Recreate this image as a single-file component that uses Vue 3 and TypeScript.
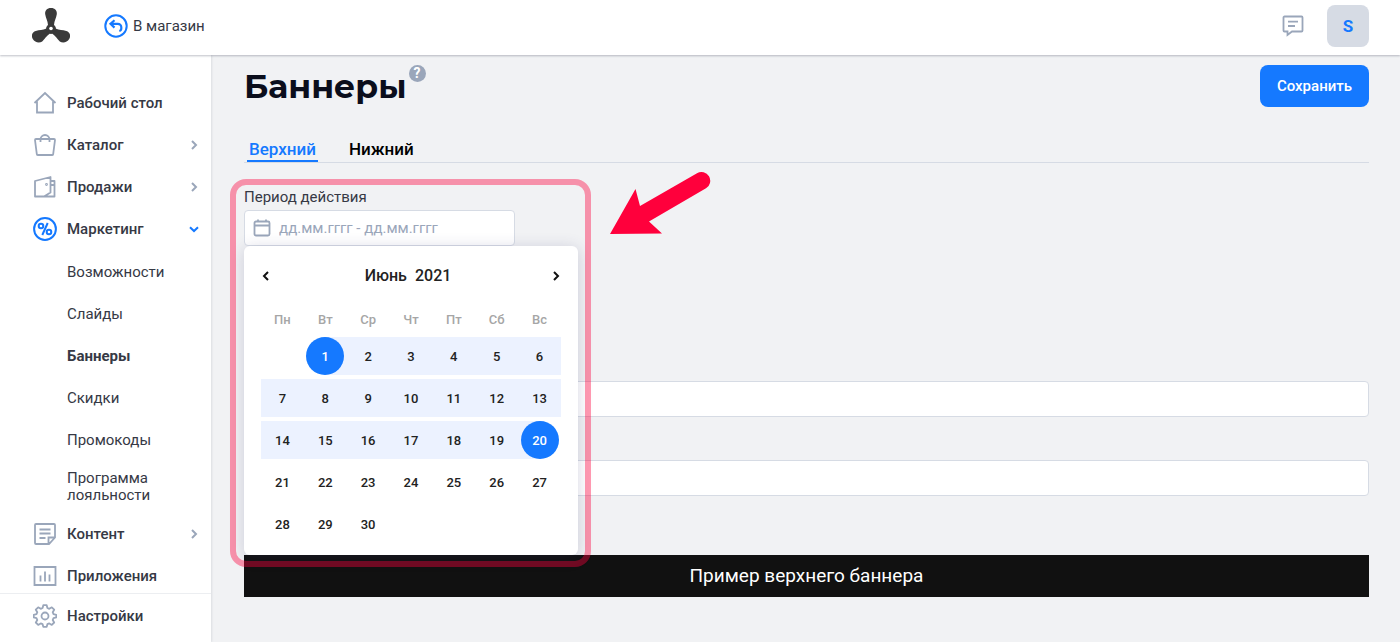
<script setup lang="ts">
import { computed, ref } from 'vue'

interface NavItem {
  id: string
  label: string
  expandable?: boolean
}

const topItems: NavItem[] = [
  { id: 'desk', label: 'Рабочий стол' },
  { id: 'catalog', label: 'Каталог', expandable: true },
  { id: 'sales', label: 'Продажи', expandable: true },
  { id: 'marketing', label: 'Маркетинг', expandable: true },
]
const marketingItems: string[] = ['Возможности', 'Слайды', 'Баннеры', 'Скидки', 'Промокоды', 'Программа лояльности']
const bottomItems: NavItem[] = [
  { id: 'content', label: 'Контент', expandable: true },
  { id: 'apps', label: 'Приложения' },
]

const tabs: string[] = ['Верхний', 'Нижний']
const activeTab = ref<string>('Верхний')

const weekdays: string[] = ['Пн', 'Вт', 'Ср', 'Чт', 'Пт', 'Сб', 'Вс']
const rangeStart = ref<number>(1)
const rangeEnd = ref<number>(20)
const firstOffset = 1
const daysInMonth = 30

const weeks = computed<(number | null)[][]>(() =>
  Array.from({ length: 5 }, (_, w) =>
    Array.from({ length: 7 }, (_, d) => {
      const day = w * 7 + d + 1 - firstOffset
      return day >= 1 && day <= daysInMonth ? day : null
    }),
  ),
)

function dayClass(day: number | null) {
  return {
    start: day === rangeStart.value,
    end: day === rangeEnd.value,
    within: day !== null && day > rangeStart.value && day < rangeEnd.value,
  }
}
</script>

<template>
  <div class="page">
    <header class="topbar">
      <a href="#" class="logo" aria-label="Главная">
        <svg width="38" height="36" viewBox="0 0 38 36" fill="#3a3a3a">
          <path d="M19 0c4 0 6.300 2.600 5.800 6.300-.6 4-2.500 6.200-2.800 10.700h-6c-.3-4.500-2.200-6.700-2.800-10.700C12.700 2.600 15 0 19 0z" />
          <path d="M.8 31c-2-3.500-.6-7 2.900-8 3.900-1.200 6.700-.4 10.800-2.400l3.400 5c-3.800 2.600-4.500 5.100-7.700 7.800C7.300 35.600 2.800 34.500.8 31z" />
          <path d="M37.200 31c2-3.500.6-7-2.900-8-3.900-1.200-6.700-.4-10.800-2.400l-3.400 5c3.800 2.600 4.500 5.100 7.700 7.800 2.900 2.200 7.400 1.100 9.400-2.400z" />
          <circle cx="19" cy="21" r="5" />
          <circle cx="19" cy="20.500" r="1.800" fill="#fff" />
        </svg>
      </a>
      <a href="#" class="to-shop">
        <svg width="24" height="24" viewBox="0 0 24 24" fill="none" stroke="#1579ff" stroke-width="2">
          <circle cx="12" cy="12" r="10.700" />
          <path d="M10.500 6.200 6.500 9.800l4 3.800M6.800 9.800h7a3.500 3.500 0 0 1 3.500 3.500v1.200c0 1.200-.8 2.200-2 2.500" stroke-width="2.200" />
        </svg>
        <span>В магазин</span>
      </a>
      <button type="button" class="chat" aria-label="Сообщения">
        <svg width="22" height="22" viewBox="0 0 22 22" fill="none" stroke="#9aa6ba" stroke-width="1.800">
          <path d="M2.500 1.500h17a1 1 0 0 1 1 1v13a1 1 0 0 1-1 1H10L5.500 20v-3.500h-3a1 1 0 0 1-1-1v-13a1 1 0 0 1 1-1z" />
          <path d="M6 6.700h10M6 11h7" />
        </svg>
      </button>
      <button type="button" class="avatar">S</button>
    </header>

    <div class="body">
      <aside class="sidebar">
        <nav class="nav">
          <a v-for="item in topItems" :key="item.id" href="#" class="nav-item">
            <svg v-if="item.id === 'desk'" class="icon" viewBox="0 0 24 24">
              <path d="M1.500 12 12 2l10.500 10M4 10.500v11h16v-11" />
            </svg>
            <svg v-else-if="item.id === 'catalog'" class="icon" viewBox="0 0 24 24">
              <path d="M3 6h18a1 1 0 0 1 1 1l-1.800 14a1 1 0 0 1-1 1H4.800a1 1 0 0 1-1-1L2 7a1 1 0 0 1 1-1zM7.500 9V6.500a4.500 4.500 0 0 1 9 0V9" />
            </svg>
            <svg v-else-if="item.id === 'sales'" class="icon" viewBox="0 0 24 24">
              <path d="M2 6 17.500 2v15.500L11 21.500H2zM17.500 6h4v15.500H9M17.500 10h4" stroke-linejoin="round" />
              <circle cx="13.500" cy="9.500" r=".5" />
            </svg>
            <svg v-else class="icon active" viewBox="0 0 24 24">
              <circle cx="12" cy="12" r="10.900" />
              <circle cx="8" cy="9" r="2.300" />
              <circle cx="16" cy="15" r="2.300" />
              <path d="M14.700 6 9.300 18" />
            </svg>
            <span class="nav-label">{{ item.label }}</span>
            <svg v-if="item.id === 'marketing'" class="chevron open" viewBox="0 0 10 10"><path d="M1 3.200 5 7l4-3.800" /></svg>
            <svg v-else-if="item.expandable" class="chevron" viewBox="0 0 10 10"><path d="m3 1 4 4-4 4" /></svg>
          </a>
          <div class="subnav">
            <a
              v-for="label in marketingItems"
              :key="label"
              href="#"
              class="sub-item"
              :class="{ current: label === 'Баннеры', tall: label.length > 15 }"
            >{{ label }}</a>
          </div>
          <a v-for="item in bottomItems" :key="item.id" href="#" class="nav-item">
            <svg v-if="item.id === 'content'" class="icon" viewBox="0 0 24 24">
              <path d="M3 2h18a1 1 0 0 1 1 1v12.500L16 22H3a1 1 0 0 1-1-1V3a1 1 0 0 1 1-1zM15.500 22v-6.500H22M6.500 7.500h11M6.500 11.500h11M6.500 16h6" />
            </svg>
            <svg v-else class="icon" viewBox="0 0 24 24">
              <path d="M1.500 3h21v18h-21zM7.500 17.500v-6M12 17.500v-10M16.500 17.500v-7" />
            </svg>
            <span class="nav-label">{{ item.label }}</span>
            <svg v-if="item.expandable" class="chevron" viewBox="0 0 10 10"><path d="m3 1 4 4-4 4" /></svg>
          </a>
        </nav>
        <a href="#" class="nav-item settings">
          <svg class="icon" viewBox="0 0 24 24">
            <path d="M10.300 1.200h3.400l.7 2.800 1.900.8 2.500-1.500 2.400 2.400-1.500 2.500.8 1.900 2.800.7v2.600l-2.800.7-.8 1.900 1.500 2.500-2.400 2.400-2.500-1.500-1.900.8-.7 2.600h-3.400l-.7-2.600-1.900-.8-2.500 1.500-2.400-2.400 1.500-2.500-.8-1.900-2.800-.7v-2.600l2.800-.7.8-1.900-1.500-2.500 2.400-2.400 2.500 1.500L9.600 4z" stroke-linejoin="round" />
            <circle cx="12" cy="12" r="3.500" />
          </svg>
          <span class="nav-label">Настройки</span>
        </a>
      </aside>

      <main class="main">
        <div class="title-row">
          <h1>Баннеры</h1>
          <button type="button" class="help" aria-label="Справка">?</button>
          <button type="button" class="save">Сохранить</button>
        </div>

        <div class="tabs" role="tablist">
          <button
            v-for="tab in tabs"
            :key="tab"
            type="button"
            role="tab"
            class="tab"
            :class="{ selected: tab === activeTab }"
            :aria-selected="tab === activeTab"
            @click="activeTab = tab"
          >{{ tab }}</button>
        </div>

        <form class="form" @submit.prevent>
          <div class="period">
            <label for="period">Период действия</label>
            <div class="date-box">
              <svg width="18" height="18" viewBox="0 0 18 18" fill="none" stroke="#9aa6ba" stroke-width="1.800">
                <rect x="1.500" y="2.500" width="15" height="14" rx="1.500" />
                <path d="M1.500 6.500h15M5 .5v2M13 .5v2" />
              </svg>
              <input id="period" type="text" placeholder="дд.мм.гггг - дд.мм.гггг" />
            </div>

            <div class="calendar">
              <div class="cal-head">
                <button type="button" class="arrow" aria-label="Предыдущий месяц">
                  <svg width="10" height="10" viewBox="0 0 10 10"><path d="M7 1 3 5l4 4" /></svg>
                </button>
                <div class="month"><span>Июнь</span><span>2021</span></div>
                <button type="button" class="arrow" aria-label="Следующий месяц">
                  <svg width="10" height="10" viewBox="0 0 10 10"><path d="m3 1 4 4-4 4" /></svg>
                </button>
              </div>
              <table>
                <thead>
                  <tr><th v-for="d in weekdays" :key="d" scope="col">{{ d }}</th></tr>
                </thead>
                <tbody>
                  <tr v-for="(week, w) in weeks" :key="w">
                    <td v-for="(day, d) in week" :key="d" :class="dayClass(day)">
                      <button v-if="day" type="button" class="day">{{ day }}</button>
                    </td>
                  </tr>
                </tbody>
              </table>
            </div>

            <div class="highlight"></div>
            <svg class="pointer" width="102" height="64" viewBox="0 0 102 64" fill="#ff003c">
              <path d="M0 63 25.500 18l4.500 17L87 2.300a8.600 8.600 0 0 1 9 15L39 50.500 52 62.500z" />
            </svg>
          </div>

          <input type="text" class="field" aria-label="Текст баннера" />
          <input type="text" class="field" aria-label="Ссылка баннера" />
          <div class="banner">Пример верхнего баннера</div>
        </form>
      </main>
    </div>
  </div>
</template>

<style>
body {
  background: #f1f2f4;
}
</style>

<style scoped>
* {
  box-sizing: border-box;
}
.page {
  min-height: 100vh;
  display: flex;
  flex-direction: column;
  font-family: Roboto, 'Noto Sans', sans-serif;
  font-size: 15px;
  color: #363945;
}
button,
input {
  font: inherit;
  color: inherit;
  border: 0;
  padding: 0;
  background: none;
}
button {
  cursor: pointer;
}
a {
  color: inherit;
  text-decoration: none;
}
svg {
  display: block;
  flex: none;
}
.topbar {
  position: relative;
  z-index: 1;
  display: flex;
  align-items: center;
  height: 55px;
  padding: 0 31px 3px 32px;
  background: #fff;
  box-shadow: 0 1px 2px rgba(40, 45, 70, 0.3);
}
.to-shop {
  display: flex;
  align-items: center;
  gap: 5px;
  margin-left: 34px;
}
.chat {
  margin-left: auto;
}
.avatar {
  width: 42px;
  height: 42px;
  margin-left: 23px;
  border-radius: 8px;
  background: #d6dbe4;
  color: #1579ff;
  font-size: 17px;
  font-weight: 700;
}
.body {
  flex: 1;
  display: flex;
}
.sidebar {
  flex: none;
  width: 211px;
  display: flex;
  flex-direction: column;
  background: #fff;
  box-shadow: 1px 0 2px rgba(40, 45, 70, 0.1);
}
.nav {
  flex: 1;
  padding-top: 27px;
  margin-bottom: -4px;
}
.nav-item {
  display: flex;
  align-items: center;
  height: 42px;
  padding: 0 12px 0 33px;
  font-weight: 500;
}
.nav-label {
  flex: 1;
  margin-left: 10px;
}
.icon {
  width: 24px;
  height: 24px;
  fill: none;
  stroke: #9aa6ba;
  stroke-width: 1.8;
}
.icon.active {
  stroke: #1579ff;
  stroke-width: 2;
}
.chevron {
  width: 10px;
  height: 10px;
  fill: none;
  stroke: #9aa6ba;
  stroke-width: 2;
}
.chevron.open {
  stroke: #1579ff;
}
.subnav {
  padding-top: 1px;
}
.sub-item {
  display: flex;
  align-items: center;
  height: 42px;
  padding: 0 40px 0 67px;
  line-height: 17px;
}
.sub-item.tall {
  height: 52px;
}
.sub-item.current {
  font-weight: 700;
}
.settings {
  height: 49px;
  padding-bottom: 5px;
  border-top: 1px solid #eceef1;
}
.main {
  flex: 1;
  min-width: 0;
  padding: 10px 31px 45px 33px;
}
.title-row {
  display: flex;
  align-items: flex-start;
}
h1 {
  margin: 0;
  font-family: Montserrat, Inter, sans-serif;
  font-size: 33px;
  line-height: 42px;
  font-weight: 700;
  color: #0b0e1c;
}
.help {
  width: 17px;
  height: 17px;
  margin-left: 2px;
  border-radius: 50%;
  background: #9aa6ba;
  color: #fff;
  font-size: 14px;
  line-height: 17px;
  font-weight: 700;
}
.save {
  height: 42px;
  margin-left: auto;
  padding: 0 17px;
  border-radius: 8px;
  background: #1579ff;
  color: #fff;
  font-weight: 500;
}
.tabs {
  display: flex;
  gap: 29px;
  margin-top: 30px;
  padding-left: 3px;
  border-bottom: 1px solid #d6dbe4;
}
.tab {
  height: 25px;
  padding: 0 2px;
  border-bottom: 2px solid transparent;
  color: #000;
  font-size: 17px;
  font-weight: 500;
}
.tab.selected {
  border-color: #1579ff;
  color: #1579ff;
}
.form {
  padding-top: 26px;
}
.period {
  position: relative;
  height: 192px;
}
.period label {
  display: block;
  line-height: 17px;
}
.date-box {
  display: flex;
  align-items: center;
  gap: 8px;
  width: 271px;
  height: 36px;
  margin-top: 4px;
  padding: 0 8px;
  border: 1px solid #d6dbe4;
  border-radius: 4px;
  background: #fff;
}
.date-box input {
  flex: 1;
  min-width: 0;
  outline: 0;
}
.date-box input::placeholder {
  color: #9aa6ba;
  opacity: 1;
}
.calendar {
  position: absolute;
  z-index: 2;
  top: 57px;
  left: 0;
  width: 334px;
  padding: 19px 17px 8px;
  border-radius: 6px;
  background: #fff;
  color: #222;
  box-shadow: 0 2px 16px rgba(50, 50, 110, 0.2);
}
.cal-head {
  display: flex;
  align-items: center;
  justify-content: space-between;
  height: 22px;
}
.arrow {
  width: 10px;
  height: 20px;
}
.arrow path {
  fill: none;
  stroke: #111;
  stroke-width: 2;
}
.month {
  display: flex;
  gap: 8px;
  padding: 0 6px 2px 0;
  font-size: 16px;
  font-weight: 500;
}
table {
  width: 100%;
  margin-top: 20px;
  table-layout: fixed;
  border-collapse: separate;
  border-spacing: 0 4px;
}
th {
  height: 22px;
  padding: 0 0 4px;
  color: #a6a6a6;
  font-size: 13px;
  line-height: 16px;
  font-weight: 500;
}
td {
  height: 38px;
  padding: 0;
}
.within {
  background: #ecf2ff;
}
.start {
  background: linear-gradient(to right, transparent 50%, #ecf2ff 50%);
}
.end {
  background: linear-gradient(to left, transparent 50%, #ecf2ff 50%);
}
.day {
  display: block;
  width: 38px;
  height: 38px;
  margin: 0 auto;
  border-radius: 50%;
  font-size: 13px;
  font-weight: 500;
}
.start .day,
.end .day {
  background: #1579ff;
  color: #fff;
}
.highlight {
  position: absolute;
  z-index: 3;
  top: -10px;
  left: -14px;
  width: 361px;
  height: 388px;
  border: 6px solid rgba(255, 0, 60, 0.4);
  border-radius: 16px;
  pointer-events: none;
}
.pointer {
  position: absolute;
  top: -18px;
  left: 366px;
}
.field {
  display: block;
  width: 100%;
  height: 36px;
  margin-bottom: 43px;
  padding: 0 12px;
  border: 1px solid #d6dbe4;
  border-radius: 4px;
  background: #fff;
}
.banner {
  margin-top: 59px;
  padding: 10px;
  background: #111;
  color: #fff;
  font-size: 19px;
  line-height: 22px;
  text-align: center;
}
</style>
